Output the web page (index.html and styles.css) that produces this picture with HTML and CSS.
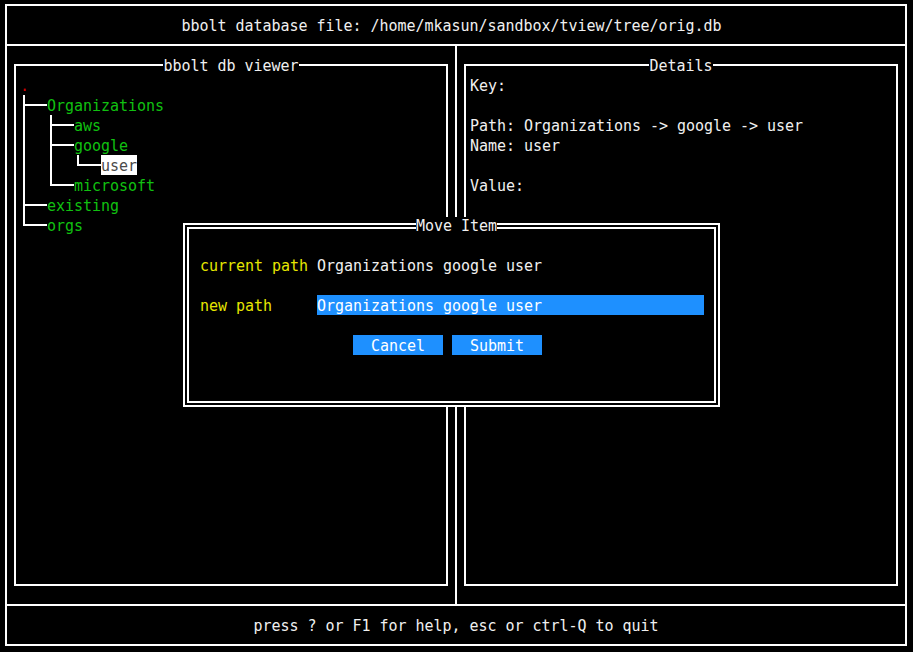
FILE: index.html
```html
<!DOCTYPE html>
<html>
<head>
<meta charset="utf-8">
<title>bbolt db viewer</title>
<link rel="stylesheet" href="styles.css">
</head>
<body>
<div class="screen">
  <div class="frame">
    <header class="header">bbolt database file: /home/mkasun/sandbox/tview/tree/orig.db</header>
    <main class="main">
      <section class="pane pane-left">
        <div class="panel">
          <div class="panel-title"><span>bbolt db viewer</span></div>
          <div class="tree">
            <div class="root">.</div>
            <ul class="branch">
              <li><span class="node">Organizations</span>
                <ul class="branch">
                  <li><span class="node">aws</span></li>
                  <li><span class="node">google</span>
                    <ul class="branch">
                      <li><span class="node selected">user</span></li>
                    </ul>
                  </li>
                  <li><span class="node">microsoft</span></li>
                </ul>
              </li>
              <li><span class="node">existing</span></li>
              <li><span class="node">orgs</span></li>
            </ul>
          </div>
        </div>
      </section>
      <section class="pane pane-right">
        <div class="panel">
          <div class="panel-title"><span>Details</span></div>
          <div class="details">
            <div class="line">Key:</div>
            <div class="line"></div>
            <div class="line">Path: Organizations -&gt; google -&gt; user</div>
            <div class="line">Name: user</div>
            <div class="line"></div>
            <div class="line">Value:</div>
          </div>
        </div>
      </section>
    </main>
    <footer class="footer">press ? or F1 for help, esc or ctrl-Q to quit</footer>
  </div>

  <div class="modal">
    <div class="modal-title"><span>Move Item</span></div>
    <div class="modal-inner">
      <div class="form">
        <div class="field">
          <span class="label">current path</span>
          <span class="value">Organizations google user</span>
        </div>
        <div class="field">
          <span class="label">new path</span>
          <span class="input">Organizations google user</span>
        </div>
        <div class="buttons">
          <button class="btn">Cancel</button>
          <button class="btn">Submit</button>
        </div>
      </div>
    </div>
  </div>
</div>
</body>
</html>
```

FILE: styles.css
```css
* { box-sizing: border-box; }

html, body {
  margin: 0;
  padding: 0;
  background: #000;
}

body {
  font-family: "DejaVu Sans Mono", "Liberation Mono", monospace;
  font-size: 15px;
  line-height: 20px;
  letter-spacing: -0.03px;
  color: #f0f0f0;
}

.screen {
  position: relative;
  width: 913px;
  height: 652px;
  padding: 4px 0 0 5px;
  overflow: hidden;
}

.frame {
  width: 902px;
  height: 642px;
  border: 2px solid #fff;
  display: flex;
  flex-direction: column;
}

.header {
  flex: none;
  height: 40px;
  border-bottom: 2px solid #fff;
  padding: 10px 9px 0 0;
  text-align: center;
  white-space: pre;
}

.main {
  flex: 1;
  display: flex;
  border-bottom: 2px solid #fff;
}

.pane {
  display: flex;
  padding: 18px 7px;
}

.pane-left {
  width: 450px;
  border-right: 2px solid #fff;
}

.pane-right {
  flex: 1;
}

.panel {
  position: relative;
  flex: 1;
  border: 2px solid #fff;
}

.panel-title {
  position: absolute;
  top: -10px;
  left: 0;
  right: 0;
  text-align: center;
  white-space: pre;
}

.panel-title span {
  background: #000;
}

.tree {
  padding: 9px 0 0 4px;
}

.root {
  color: #d00000;
  height: 20px;
  line-height: 22px;
}

.branch {
  list-style: none;
  margin: 0;
  padding: 0;
}

.branch li {
  position: relative;
  padding-left: 27px;
  line-height: 20px;
}

.branch li::before {
  content: "";
  position: absolute;
  left: 3px;
  top: 0;
  bottom: 0;
  width: 2px;
  background: #fff;
}

.branch li:last-child::before {
  bottom: auto;
  height: 11px;
}

.branch li::after {
  content: "";
  position: absolute;
  left: 3px;
  top: 9px;
  width: 24px;
  height: 2px;
  background: #fff;
}

.node {
  display: inline-block;
  vertical-align: top;
  height: 20px;
  line-height: 22px;
  color: #11c011;
}

.node.selected {
  background: #fff;
  color: #4a4a4a;
}

.details {
  padding: 9px 0 0 4px;
}

.line {
  height: 20px;
  line-height: 22px;
  white-space: pre;
}

.footer {
  flex: none;
  height: 38px;
  padding-top: 10px;
  text-align: center;
  white-space: pre;
}

.modal {
  position: absolute;
  left: 183px;
  top: 223px;
  width: 537px;
  height: 184px;
  border: 2px solid #fff;
  padding: 2px;
  background: #000;
}

.modal-title {
  position: absolute;
  top: -9px;
  left: 0;
  right: 0;
  padding-left: 10px;
  text-align: center;
  white-space: pre;
  z-index: 1;
}

.modal-title span {
  background: #000;
}

.modal-inner {
  height: 100%;
  border: 2px solid #fff;
  padding: 26px 0 0 11px;
}

.form {
  display: flex;
  flex-direction: column;
  gap: 20px;
}

.field {
  display: flex;
  height: 20px;
  line-height: 22px;
  white-space: pre;
}

.label {
  width: 117px;
  color: #e6e600;
}

.value {
  color: #f0f0f0;
}

.input {
  width: 387px;
  height: 20px;
  background: #1e90ff;
  color: #fff;
}

.buttons {
  display: flex;
  gap: 9px;
  padding-left: 153px;
}

.btn {
  width: 90px;
  height: 20px;
  margin: 0;
  padding: 0;
  border: 0;
  border-radius: 0;
  background: #1e90ff;
  color: #fff;
  font: inherit;
  letter-spacing: inherit;
  line-height: 22px;
  text-align: center;
}
```
